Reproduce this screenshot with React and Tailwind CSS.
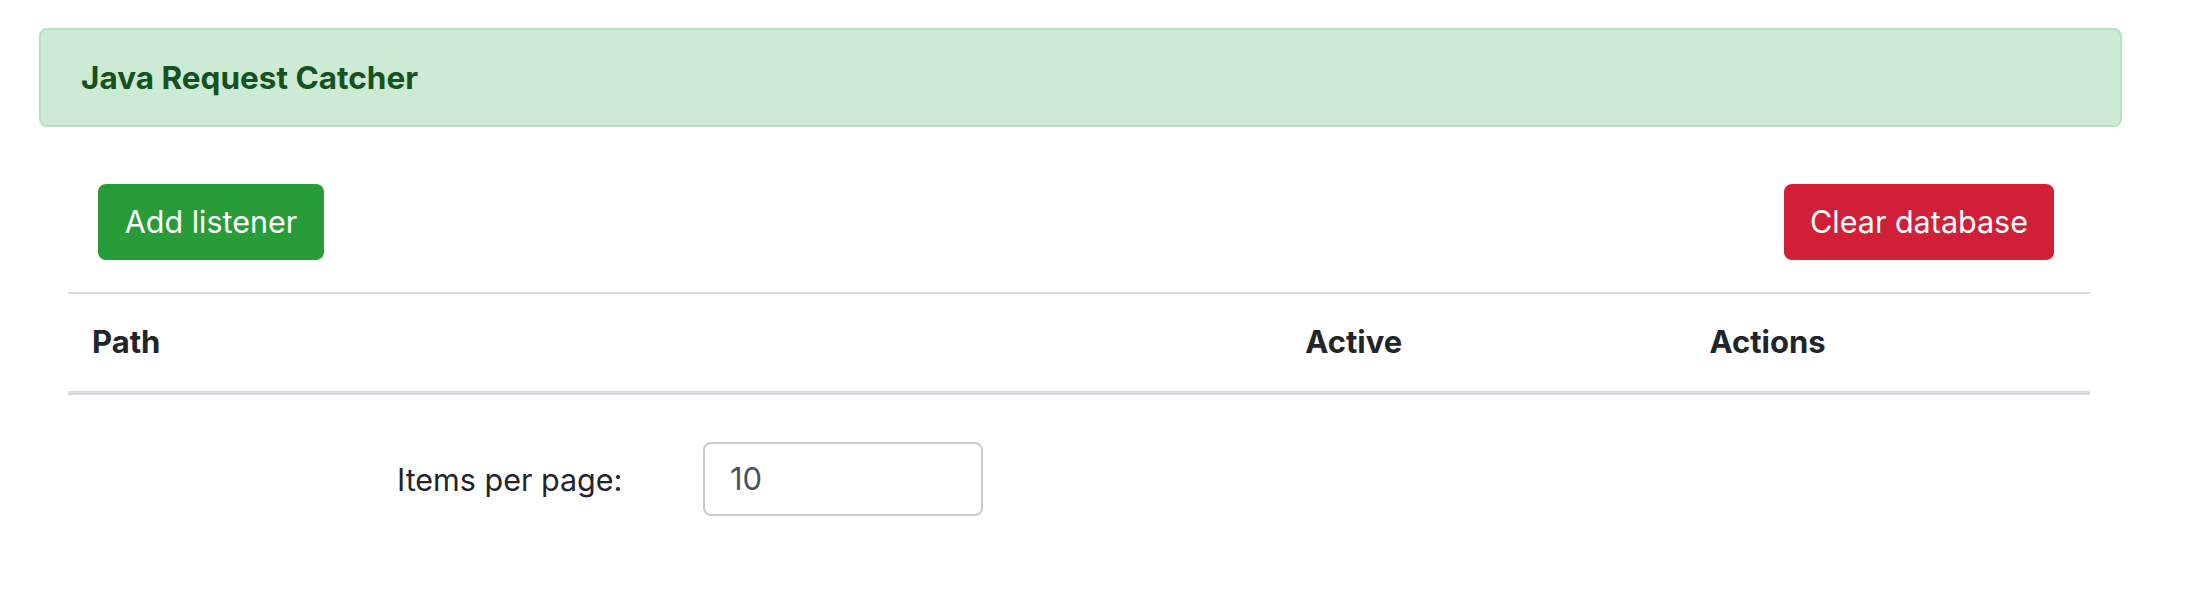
export default function App() {
  return (
    <div className="w-[2198px] h-[608px] bg-white font-['Inter',sans-serif] text-[#212529]">
      <div className="pt-[28px] pl-[39px]">
        <div className="w-[2083px] h-[99px] rounded-[8px] border-2 border-[#b9e0c3] bg-[#cdead4] pl-[40px] flex items-center">
          <h5 className="text-[31.5px] font-bold leading-[37px] text-[#14521f]">Java Request Catcher</h5>
        </div>
      </div>
      <div className="ml-[68px] w-[2022px]">
        <div className="mt-[57px] flex justify-between pl-[30px] pr-[36px]">
          <button className="h-[76px] w-[226px] rounded-[8px] bg-[#289c38] text-white text-[30.5px] leading-none">
            Add listener
          </button>
          <button className="h-[76px] w-[270px] rounded-[8px] bg-[#d01f37] text-white text-[30.5px] leading-none">
            Clear database
          </button>
        </div>
        <table className="mt-[32px] w-full border-collapse">
          <thead>
            <tr>
              <th className="w-[60%] h-[100px] border-t-2 border-b-4 border-[#d6dbe0] pl-[24px] text-left align-middle text-[31px] font-bold">Path</th>
              <th className="w-[20%] h-[100px] border-t-2 border-b-4 border-[#d6dbe0] pl-[24px] text-left align-middle text-[31px] font-bold">Active</th>
              <th className="w-[20%] h-[100px] border-t-2 border-b-4 border-[#d6dbe0] pl-[24px] text-left align-middle text-[31px] font-bold">Actions</th>
            </tr>
          </thead>
          <tbody></tbody>
        </table>
      </div>
      <div className="mt-[47px] flex items-center pl-[397px]">
        <label className="w-[306px] text-[30.5px] leading-[37px]">Items per page:</label>
        <div className="h-[74px] w-[280px] rounded-[8px] border-2 border-[#c6ccd2] flex items-center pl-[25px] text-[31px] text-[#4b5259]">
          10
        </div>
      </div>
    </div>
  );
}
